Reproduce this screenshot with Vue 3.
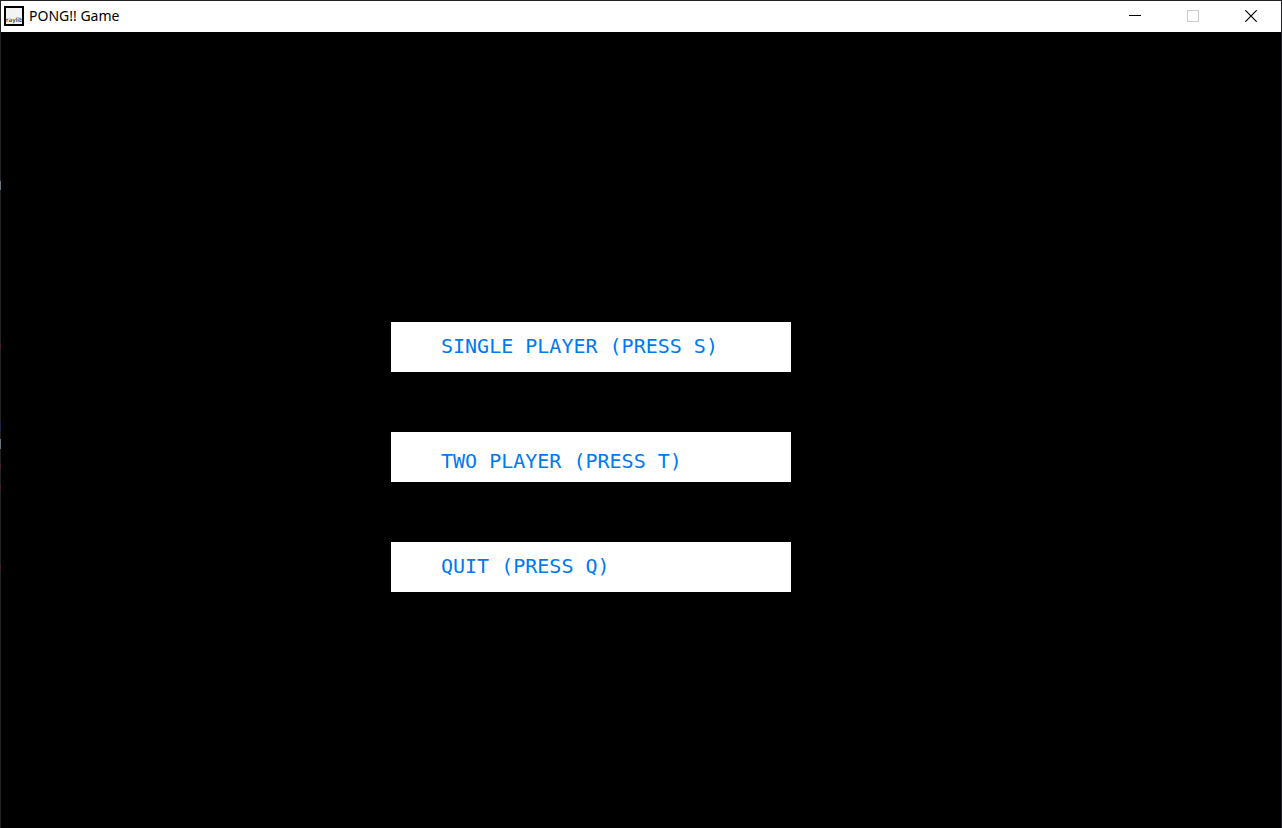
<script setup>
const items = [
  { label: 'SINGLE PLAYER (PRESS S)', low: false },
  { label: 'TWO PLAYER (PRESS T)', low: true },
  { label: 'QUIT (PRESS Q)', low: false },
]
</script>

<template>
  <div class="window">
    <header class="titlebar">
      <svg class="logo" width="20" height="20" viewBox="0 0 20 20" aria-hidden="true">
        <rect x="1" y="1" width="18" height="18" fill="#f3f3f3" stroke="#000" stroke-width="2" />
        <text x="2" y="16" class="logo-text">raylib</text>
      </svg>
      <h1 class="title">PONG!! Game</h1>
      <div class="controls">
        <button type="button" class="control" aria-label="Minimize">
          <svg width="12" height="12" viewBox="0 0 12 12" shape-rendering="crispEdges">
            <path d="M0 5.5H12" stroke="#000" fill="none" />
          </svg>
        </button>
        <button type="button" class="control" aria-label="Maximize" disabled>
          <svg width="12" height="12" viewBox="0 0 12 12" shape-rendering="crispEdges">
            <rect x="0.5" y="0.5" width="11" height="11" stroke="#ccc" fill="none" />
          </svg>
        </button>
        <button type="button" class="control" aria-label="Close">
          <svg width="12" height="12" viewBox="0 0 12 12">
            <path d="M0.3 0.3L11.7 11.7M11.7 0.3L0.3 11.7" stroke="#000" stroke-width="1.2" fill="none" />
          </svg>
        </button>
      </div>
    </header>
    <main class="game">
      <button
        v-for="item in items"
        :key="item.label"
        type="button"
        class="choice"
        :class="{ low: item.low }"
      >{{ item.label }}</button>
    </main>
  </div>
</template>

<style>
body {
  margin: 0;
  background: #000;
}
</style>

<style scoped>
.window {
  box-sizing: border-box;
  min-height: 100vh;
  padding: 1px 1px 0;
  display: flex;
  flex-direction: column;
  background: #222226 linear-gradient(
    #222226 181px, #66777d 181px, #66777d 190px, #222226 190px,
    #222226 343px, #402226 343px, #402226 349px, #222226 349px,
    #222226 422px, #1c2848 422px, #1c2848 430px, #222226 430px,
    #222226 439px, #66777d 439px, #66777d 449px, #222226 449px,
    #222226 464px, #402226 464px, #402226 470px, #222226 470px,
    #222226 484px, #402226 484px, #402226 490px, #222226 490px,
    #222226 564px, #402226 564px, #402226 570px, #222226 570px
  ) left top / 1px 100% no-repeat;
}

.titlebar {
  box-sizing: border-box;
  display: flex;
  align-items: center;
  height: 31px;
  padding: 0 1px 1px 3px;
  background: #fff;
}

.logo {
  flex: none;
}

.logo-text {
  font: 6px "DejaVu Sans", sans-serif;
  fill: #000;
}

.title {
  margin: 0 0 0 5px;
  font: 400 14px/20px "Noto Sans", "Open Sans", sans-serif;
  color: #000;
}

.controls {
  display: flex;
  align-self: stretch;
  margin-left: auto;
}

.control {
  display: flex;
  align-items: center;
  justify-content: center;
  width: 58px;
  padding: 0;
  border: 0;
  background: transparent;
}

.game {
  flex: 1;
  display: flex;
  flex-direction: column;
  align-items: center;
  justify-content: center;
  gap: 60px;
  padding: 54px 100px 0 0;
  background: #000;
}

.choice {
  display: flex;
  align-items: flex-start;
  box-sizing: border-box;
  width: 400px;
  height: 50px;
  padding: 12px 0 0 50px;
  border: 0;
  background: #fff;
  color: #0079f1;
  font: 20px/24px "DejaVu Sans Mono", monospace;
  text-align: left;
  white-space: nowrap;
}

.choice.low {
  padding-top: 17px;
}
</style>
